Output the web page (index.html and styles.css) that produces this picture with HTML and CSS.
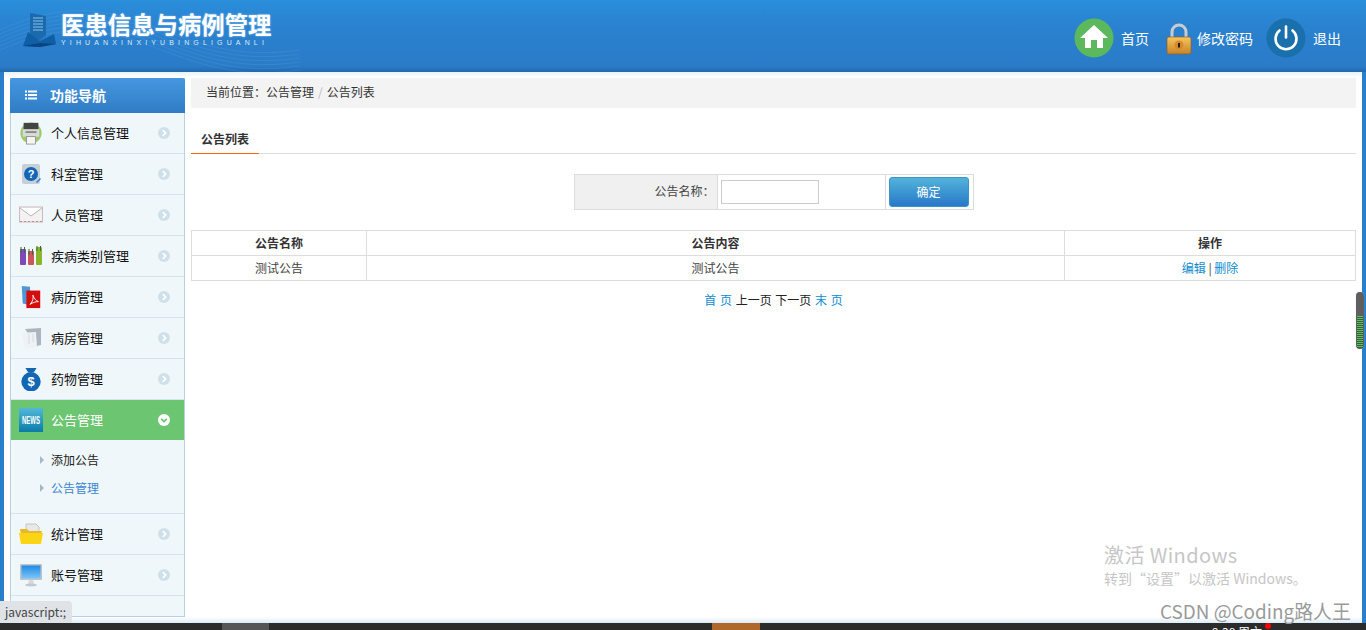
FILE: index.html
```html
<!DOCTYPE html>
<html lang="zh-CN">
<head>
<meta charset="utf-8">
<title>医患信息与病例管理</title>
<link rel="stylesheet" href="styles.css">
</head>
<body>
<svg class="defs" width="0" height="0" aria-hidden="true">
  <symbol id="chev" viewBox="0 0 12 12"><circle cx="6" cy="6" r="6" fill="currentColor"/><path d="M4.8 3.2 7.6 6 4.8 8.8" fill="none" stroke="#fff" stroke-width="1.7"/></symbol>
  <symbol id="chevd" viewBox="0 0 12 12"><circle cx="6" cy="6" r="6" fill="#fff"/><path d="M3.2 4.8 6 7.6 8.8 4.8" fill="none" stroke="#6cc570" stroke-width="1.7"/></symbol>
</svg>
<header class="top">
  <svg class="waves" viewBox="0 0 300 72" aria-hidden="true">
    <g fill="none" stroke="#7cc0ee" stroke-opacity=".22" stroke-width=".7">
      <path d="M0 30C50 8 90 4 140 22S230 60 300 50"/><path d="M0 34C50 12 90 8 140 26S230 64 300 54"/><path d="M0 38C50 16 90 12 140 30S230 68 300 58"/><path d="M0 42C50 20 90 16 140 34S230 72 300 62"/><path d="M0 46C50 24 90 20 140 38S230 76 300 66"/><path d="M0 50C50 28 90 24 140 42S230 80 300 70"/>
    </g>
  </svg>
  <div class="brand">
    <svg class="brand-icon" viewBox="0 0 36 36" aria-hidden="true">
      <path d="M8 1 24 4 V23 L18 28 8 25Z" fill="#1b6aae"/>
      <path d="M11 6h10M11 9h10M11 12h10M11 15h10M11 18h10" stroke="#8fc3ea" stroke-width="1"/>
      <path d="M6 20 18 29 32 22 34 32 18 35 1 34Z" fill="#0f5fa6"/>
      <path d="M1 34 18 31 34 32 18 35Z" fill="#0a4582"/>
    </svg>
    <div class="brand-text">
      <div class="brand-title">医患信息与病例管理</div>
      <div class="brand-sub">YIHUANXINXIYUBINGLIGUANLI</div>
    </div>
  </div>
  <nav class="top-nav">
    <a class="top-link">
      <svg class="top-icon" viewBox="0 0 40 40" aria-hidden="true"><circle cx="20" cy="20" r="19.5" fill="#5cb85c"/><path d="M20 7 6 20h5v10h6v-8h6v8h6V20h5z" fill="#fff"/></svg>
      <span>首页</span>
    </a>
    <a class="top-link lock-link">
      <svg class="lock-icon" viewBox="0 0 26 32" aria-hidden="true">
        <defs><linearGradient id="lk" x1="0" y1="0" x2="0" y2="1"><stop offset="0" stop-color="#f7c65c"/><stop offset="1" stop-color="#c8832a"/></linearGradient></defs>
        <path d="M6 15V9a7 7 0 0 1 14 0v6" fill="none" stroke="#c6ccd2" stroke-width="3"/>
        <rect x="1" y="14" width="24" height="17" rx="2" fill="url(#lk)" stroke="#96601c" stroke-width=".7"/>
        <circle cx="13" cy="22" r="4.5" fill="#d68a2c"/><path d="M13 20v4.5" stroke="#2b1a08" stroke-width="2"/>
      </svg>
      <span>修改密码</span>
    </a>
    <a class="top-link power-link">
      <svg class="top-icon" viewBox="0 0 40 40" aria-hidden="true"><circle cx="20" cy="20" r="19.5" fill="#1a6fad"/><path d="M13.5 12.5a10.5 10.5 0 1 0 13 0" fill="none" stroke="#fff" stroke-width="2.6" stroke-linecap="round"/><path d="M20 8.5v11" stroke="#fff" stroke-width="2.6" stroke-linecap="round"/></svg>
      <span>退出</span>
    </a>
  </nav>
</header>

<div class="shell">
  <aside class="side">
    <div class="side-head">
      <svg class="list-icon" viewBox="0 0 12 10" aria-hidden="true"><path d="M0 .5h2v2H0zM3 .5h9v2H3zM0 4h2v2H0zM3 4h9v2H3zM0 7.500h2v2H0zM3 7.500h9v2H3z" fill="#fff"/></svg>
      <span>功能导航</span>
    </div>
    <ul class="menu">
      <li class="item">
        <svg class="mi" viewBox="0 0 24 26" aria-hidden="true"><circle cx="12" cy="13" r="11.500" fill="#9cc96b"/><rect x="4" y="2" width="16" height="7" fill="#444"/><rect x="3" y="9" width="18" height="8" fill="#d9d9d9"/><rect x="6" y="11" width="12" height="2" fill="#888"/><rect x="7" y="17" width="10" height="8" fill="#f4f4f4" stroke="#777" stroke-width=".7"/></svg>
        <span class="label">个人信息管理</span><svg class="chev"><use href="#chev"/></svg>
      </li>
      <li class="item">
        <svg class="mi" viewBox="0 0 24 24" aria-hidden="true"><rect x="3" y="2" width="18" height="20" rx="2" fill="#c6d0d6"/><circle cx="12" cy="12" r="7" fill="#1467b5"/><text class="q" x="12" y="16" text-anchor="middle">?</text><path d="M17 20l4-4 1 1-4 4z" fill="#2a7fd0"/></svg>
        <span class="label">科室管理</span><svg class="chev"><use href="#chev"/></svg>
      </li>
      <li class="item">
        <svg class="mi" viewBox="0 0 24 18" aria-hidden="true"><rect x=".5" y="1" width="23" height="15" fill="#f2f2f2" stroke="#d0b8bc"/><path d="M1 2l11 8 11-8" fill="#fff" stroke="#b5b5b5"/><path d="M1 15.500h22" stroke="#c98a8a" stroke-dasharray="2 2"/></svg>
        <span class="label">人员管理</span><svg class="chev"><use href="#chev"/></svg>
      </li>
      <li class="item">
        <svg class="mi" viewBox="0 0 24 20" aria-hidden="true"><rect x="1" y="3" width="6" height="16" rx="1" fill="#7e4bb5"/><rect x="9" y="5" width="6" height="14" rx="1" fill="#c9575c"/><rect x="17" y="1" width="6" height="18" rx="1" fill="#8cb52e"/><path d="M2 1v6M5.500 1v6M10 3v6M13.500 3v6M18 0v5M21.500 0v5" stroke="#3d6a3a"/></svg>
        <span class="label">疾病类别管理</span><svg class="chev"><use href="#chev"/></svg>
      </li>
      <li class="item">
        <svg class="mi" viewBox="0 0 24 26" aria-hidden="true"><path d="M2 1l9 1v20l-8-2z" fill="#4f97d6"/><rect x="7" y="6" width="15" height="19" fill="#d40d0d"/><path d="M11 21c3-3 4-8 3-10 1 3 3 6 6 7-3 0-6 1-9 3z" fill="none" stroke="#fff"/></svg>
        <span class="label">病历管理</span><svg class="chev"><use href="#chev"/></svg>
      </li>
      <li class="item">
        <svg class="mi" viewBox="0 0 24 24" aria-hidden="true"><path d="M6 3l16-1v17l-4 1z" fill="#aab5bf"/><path d="M3 7l14-1 1 15-12 2z" fill="#eef2f5"/><path d="M10 8v10M14 8v8" stroke="#d5dbe0"/></svg>
        <span class="label">病房管理</span><svg class="chev"><use href="#chev"/></svg>
      </li>
      <li class="item">
        <svg class="mi" viewBox="0 0 24 26" aria-hidden="true"><path d="M6 1h12l-3 5H9z" fill="#1266b3"/><circle cx="12" cy="16" r="10.500" fill="#1266b3"/><text class="dollar" x="12" y="21" text-anchor="middle">$</text></svg>
        <span class="label">药物管理</span><svg class="chev"><use href="#chev"/></svg>
      </li>
      <li class="item active">
        <svg class="mi" viewBox="0 0 24 24" aria-hidden="true"><defs><linearGradient id="nw" x1="0" y1="0" x2="0" y2="1"><stop offset="0" stop-color="#53b8d8"/><stop offset="1" stop-color="#0a7ca8"/></linearGradient></defs><rect width="24" height="24" fill="url(#nw)"/><text class="news" transform="translate(12 16) scale(.6 1)" text-anchor="middle">NEWS</text></svg>
        <span class="label">公告管理</span><svg class="chev"><use href="#chevd"/></svg>
      </li>
      <li class="sub">
        <a class="sub-link">添加公告</a>
        <a class="sub-link current">公告管理</a>
      </li>
      <li class="item">
        <svg class="mi" viewBox="0 0 24 22" aria-hidden="true"><path d="M7 1h10l3 3v9H7z" fill="#e8e8e8" stroke="#aaa" stroke-width=".6"/><path d="M1 6h7l2 2h13l-1 3H2z" fill="#e7b92a"/><path d="M0 10h24l-2 11H2z" fill="#fbd416"/></svg>
        <span class="label">统计管理</span><svg class="chev"><use href="#chev"/></svg>
      </li>
      <li class="item">
        <svg class="mi" viewBox="0 0 24 24" aria-hidden="true"><rect x="1" y="1" width="22" height="16" rx="1" fill="#bfc4c8"/><defs><linearGradient id="sc" x1="0" y1="0" x2="0" y2="1"><stop offset="0" stop-color="#1f8ae6"/><stop offset="1" stop-color="#7cc7f7"/></linearGradient></defs><rect x="2.500" y="2.500" width="19" height="13" fill="url(#sc)"/><path d="M10 17h4l1 4H9z" fill="#d6d9dc"/><ellipse cx="12" cy="22" rx="6" ry="1.500" fill="#c4c8cb"/></svg>
        <span class="label">账号管理</span><svg class="chev"><use href="#chev"/></svg>
      </li>
    </ul>
  </aside>

  <main class="content">
    <div class="crumbs">当前位置：公告管理<i>/</i>公告列表</div>
    <div class="tabs"><span class="tab">公告列表</span></div>
    <form class="search">
      <label class="search-label">公告名称：</label>
      <div class="search-field"><input class="search-input" type="text"></div>
      <div class="search-action"><button class="btn" type="button">确定</button></div>
    </form>
    <table class="grid">
      <colgroup><col class="c1"><col class="c2"><col class="c3"></colgroup>
      <thead><tr><th>公告名称</th><th>公告内容</th><th>操作</th></tr></thead>
      <tbody><tr><td>测试公告</td><td>测试公告</td><td><a class="lnk">编辑</a> | <a class="lnk">删除</a></td></tr></tbody>
    </table>
    <div class="pager"><a class="lnk">首 页</a> 上一页 下一页 <a class="lnk">末 页</a></div>
  </main>
</div>

<footer class="taskbar">
  <span class="task gray"></span>
  <span class="task orange"></span>
  <span class="clock">9:38 周六</span>
  <span class="dot"></span>
</footer>

<div class="scroll-thumb"><span class="scroll-fill"></span></div>
<div class="activate">
  <div class="activate-1">激活 Windows</div>
  <div class="activate-2">转到“设置”以激活 Windows。</div>
</div>
<div class="csdn">CSDN @Coding路人王</div>
<div class="status">javascript:;</div>
</body>
</html>
```
FILE: styles.css
```css
* { box-sizing: border-box; }
html, body { height: 100%; }
body {
  margin: 0;
  height: 630px;
  overflow: hidden;
  display: flex;
  flex-direction: column;
  position: relative;
  background: #2a7fcc;
  font-family: "Noto Sans CJK SC", "Liberation Sans", sans-serif;
  font-size: 12px;
  color: #333;
}
.defs { position: absolute; }
ul { list-style: none; margin: 0; padding: 0; }

.top {
  height: 72px;
  flex: none;
  position: relative;
  display: flex;
  justify-content: space-between;
  background: linear-gradient(#2a8fdc 0, #2a85d2 18px, #2a7fcc 40px, #2a7cc8 66px, #2069ad 72px);
  overflow: hidden;
}
.waves { position: absolute; left: 0; top: 0; width: 300px; height: 72px; }
.brand { position: relative; display: flex; padding: 12px 0 0 22px; }
.brand-icon { width: 36px; height: 36px; }
.brand-text { margin-left: 3px; }
.brand-title {
  font-size: 23.4px;
  font-weight: 700;
  line-height: 24px;
  color: #fff;
  white-space: nowrap;
  text-shadow: 0 0 2px rgba(190, 225, 255, .8);
}
.brand-sub {
  font-family: "Liberation Sans", sans-serif;
  font-size: 7px;
  line-height: 10px;
  margin-top: 2px;
  letter-spacing: 4.140px;
  color: #d8ecfb;
  white-space: nowrap;
}
.top-nav { display: flex; align-items: flex-start; padding: 18px 25px 0 0; }
.top-link { display: flex; align-items: center; height: 40px; margin-left: 14px; color: #fff; font-size: 14px; }
.top-link span { margin-left: 7px; line-height: 40px; }
.top-icon { width: 40px; height: 40px; }
.lock-icon { width: 26px; height: 32px; margin-top: 2px; }
.lock-link { margin-left: 17px; }
.lock-link span { margin-left: 5px; }
.power-link { margin-left: 13px; }

.shell {
  flex: 1;
  min-height: 0;
  margin: 0 4px;
  display: flex;
  background: linear-gradient(#e8f2f9 0, #fff 6px, #fff calc(100% - 6px), #dcebf5 100%);
  padding: 6px 6px 6px;
  gap: 6px;
}
.side {
  width: 175px;
  flex: none;
  background: #eff7fb;
  border: 1px solid #b9d0e0;
  border-top: 0;
  display: flex;
  flex-direction: column;
}
.side-head {
  height: 35px;
  margin: 0 -1px;
  display: flex;
  align-items: center;
  padding: 0 0 2px 15px;
  color: #fff;
  font-size: 14px;
  font-weight: 700;
  border-radius: 2px 2px 0 0;
  background: linear-gradient(#4697e0, #2f7cc4);
}
.list-icon { width: 12px; height: 10px; margin-right: 13px; }
.item {
  height: 41px;
  display: flex;
  align-items: center;
  padding: 0 14px 0 8px;
  border-bottom: 1px solid #d5e3ec;
  font-size: 13px;
  color: #111;
}
.mi { width: 24px; height: 24px; flex: none; }
.label { margin-left: 8px; flex: 1; line-height: 39px; padding-bottom: 1px; }
.chev { width: 12px; height: 12px; color: #cfe0ea; flex: none; }
.item.active { background: #6cc570; color: #fff; height: 40px; border-bottom: 0; }
.sub { height: 74px; padding: 6px 0 0 29px; border-bottom: 1px solid #d5e3ec; display: flex; flex-direction: column; }
.sub-link { height: 28px; line-height: 28px; padding-left: 11px; color: #222; position: relative; }
.sub-link::before {
  content: "";
  position: absolute;
  left: 0;
  top: 10px;
  border-left: 4px solid #a4b8c6;
  border-top: 4px solid transparent;
  border-bottom: 4px solid transparent;
}
.sub-link.current { color: #3d86d0; }
.q { font: 700 11px "Liberation Sans", sans-serif; fill: #fff; }
.dollar { font: 700 14px "Liberation Sans", sans-serif; fill: #fff; }
.news { font: 700 10px "Liberation Sans", sans-serif; fill: #fff; }

.content { flex: 1; min-width: 0; }
.crumbs { height: 30px; line-height: 28px; padding-left: 15px; background: #f3f3f3; color: #333; }
.crumbs i { font-style: normal; color: #bbb; margin: 0 4px; }
.tabs { height: 46px; margin-bottom: 20px; display: flex; align-items: flex-end; border-bottom: 1px solid #ddd; }
.tab {
  width: 68px;
  height: 28px;
  line-height: 25px;
  margin-bottom: -1px;
  padding-left: 10px;
  font-weight: 700;
  color: #333;
  border-bottom: 1px solid #f60;
}
.search {
  width: 400px;
  height: 36px;
  margin: 0 auto 20px;
  display: flex;
  border: 1px solid #ddd;
}
.search-label { width: 143px; background: #f0f0f0; border-right: 1px solid #ddd; text-align: right; padding-right: 2px; line-height: 32px; color: #444; }
.search-field { width: 168px; border-right: 1px solid #ddd; padding: 5px 0 0 3px; }
.search-input { display: block; width: 98px; height: 24px; margin: 0; padding: 0 4px; border: 1px solid #ccc; background: #fff; }
.search-action { flex: 1; padding: 2px 0 0 3px; }
.btn {
  display: block;
  width: 80px;
  height: 30px;
  padding: 0 0 2px;
  border: 1px solid #3c95c8;
  border-radius: 3px;
  background: linear-gradient(#52b3da, #2878c8);
  color: #fff;
  font: 12px "Noto Sans CJK SC", sans-serif;
}
.grid { width: 100%; table-layout: fixed; border-collapse: collapse; }
.grid .c1 { width: 175px; }
.grid .c3 { width: 291px; }
.grid th, .grid td { height: 25px; padding: 0; border: 1px solid #ddd; text-align: center; font-size: 12px; color: #444; line-height: 16px; }
.grid th { color: #333; font-weight: 700; }
.lnk { color: #0e8bd0; }
.pager { margin-top: 10px; text-align: center; line-height: 18px; color: #222; word-spacing: 1px; }

.taskbar { height: 7px; flex: none; position: relative; overflow: hidden; background: #2b2b2b; }
.task { position: absolute; top: 0; height: 7px; }
.task.gray { left: 222px; width: 47px; background: #565656; }
.task.orange { left: 712px; width: 48px; background: #b0672a; }
.clock { position: absolute; left: 1212px; top: 1px; color: #fff; font-size: 12px; line-height: 16px; }
.dot { position: absolute; left: 1265px; top: 0; width: 6px; height: 6px; border-radius: 50%; background: #f00; }

.scroll-thumb {
  position: absolute;
  left: 1356px;
  top: 292px;
  width: 8px;
  height: 57px;
  border-radius: 4px;
  background: #5f5f5f;
  box-shadow: 0 0 1px #9cc3e6;
  overflow: hidden;
}
.scroll-fill {
  position: absolute;
  left: 1px;
  right: 1px;
  top: 24px;
  bottom: 1px;
  background: repeating-linear-gradient(#58c45c 0 1px, #3a5c3c 1px 2px);
}
.activate { position: absolute; left: 1104px; top: 541px; color: #c6c6c6; white-space: nowrap; }
.activate-1 { font-size: 20px; line-height: 28px; letter-spacing: .4px; }
.activate-2 { font-size: 14px; line-height: 18px; }
.csdn { position: absolute; left: 1160px; top: 598px; font-size: 18.900px; line-height: 26px; color: #9a9a9a; white-space: nowrap; }
.status {
  position: absolute;
  left: 0;
  top: 601px;
  width: 72px;
  height: 22px;
  padding-left: 5px;
  line-height: 22px;
  font-size: 12px;
  color: #444;
  background: #dfe3e8;
  border-radius: 0 4px 0 0;
}
```
